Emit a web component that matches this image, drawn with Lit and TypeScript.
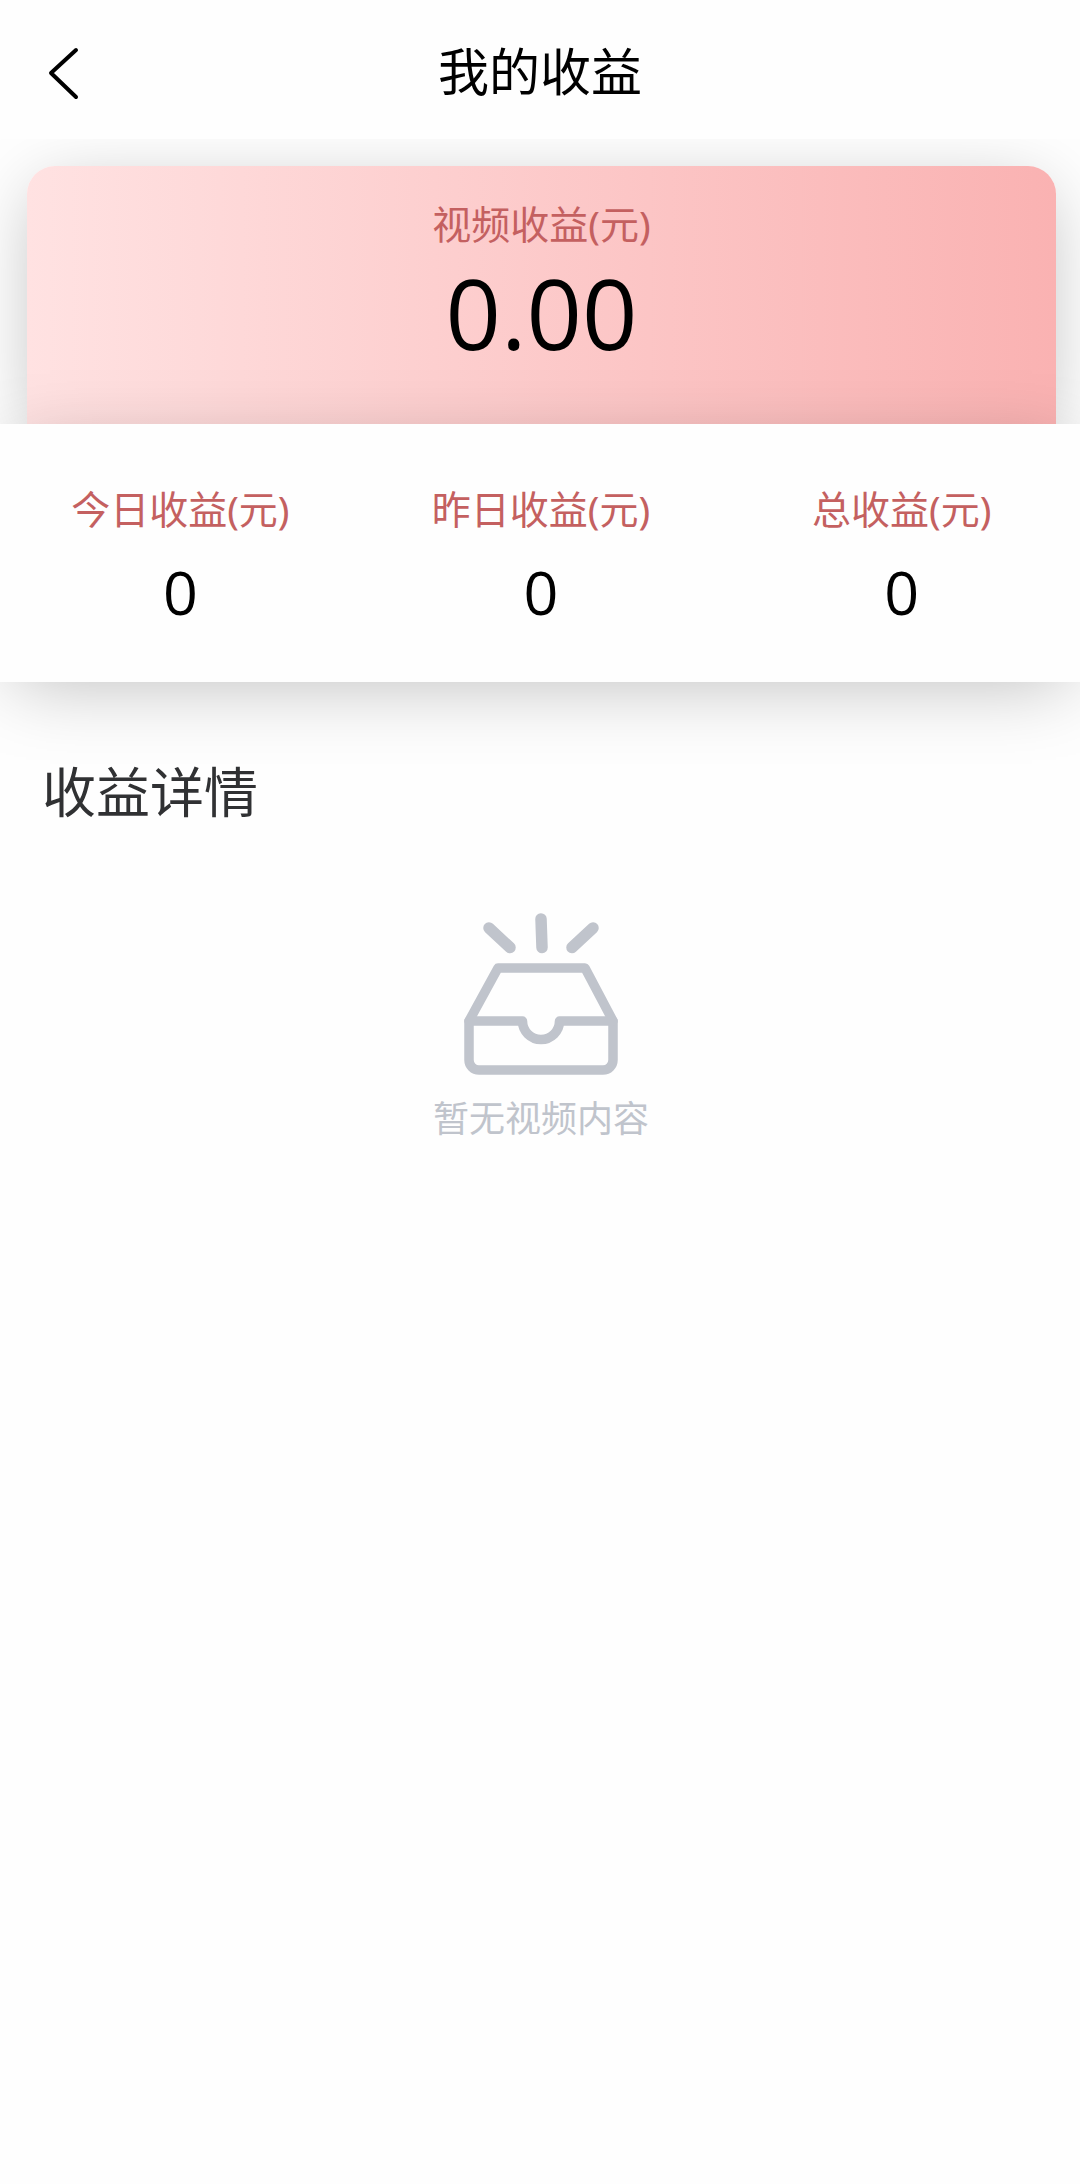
import { LitElement, html, css } from "lit";
import { customElement, state } from "lit/decorators.js";

interface Stat {
  label: string;
  value: string;
}

@customElement("app-root")
export class AppRoot extends LitElement {
  @state() private total = "0.00";

  @state() private stats: Stat[] = [
    { label: "今日收益(元)", value: "0" },
    { label: "昨日收益(元)", value: "0" },
    { label: "总收益(元)", value: "0" },
  ];

  static styles = css`
    :host {
      display: block;
      min-height: 100vh;
      overflow: hidden;
      background: #fefefe;
      color: #000;
      font-family: "Noto Sans", "Noto Sans CJK SC", sans-serif;
    }
    h1, h2, p, dl, dt, dd {
      margin: 0;
      font-weight: 400;
    }
    .nav {
      position: relative;
      z-index: 2;
      display: grid;
      grid-template-columns: 128px 1fr 128px;
      align-items: center;
      height: 139px;
      background: #fefefe;
    }
    .back {
      display: flex;
      align-items: center;
      justify-content: center;
      height: 100%;
      padding: 8px 0 0;
      border: 0;
      background: none;
      color: inherit;
    }
    .back svg {
      width: 32px;
      height: 54px;
    }
    .title {
      padding-top: 2px;
      font-size: 51px;
      line-height: 72px;
      text-align: center;
    }
    .card {
      display: flex;
      flex-direction: column;
      align-items: center;
      height: 258px;
      margin: 27px 24px 0 27px;
      padding-top: 29px;
      box-sizing: border-box;
      border-radius: 28px 28px 0 0;
      background: linear-gradient(90deg, #ffe2e2, #fab2b2);
      box-shadow: 0 14px 72px -10px rgba(0, 0, 0, 0.27);
    }
    .label {
      color: #c46060;
      font-size: 39px;
      line-height: 58px;
    }
    .total,
    .value {
      font-family: "Open Sans", "Noto Sans", sans-serif;
    }
    .total {
      font-size: 97px;
      line-height: 118px;
    }
    .stats {
      position: relative;
      display: grid;
      grid-template-columns: repeat(3, 1fr);
      height: 258px;
      margin-right: -2px;
      padding-top: 56px;
      box-sizing: border-box;
      background: #fefefe;
      box-shadow: 0 14px 72px -14px rgba(0, 0, 0, 0.27);
      text-align: center;
    }
    .value {
      font-size: 61px;
      line-height: 108px;
    }
    .heading {
      padding: 70px 42px 0;
      color: #303133;
      font-size: 54px;
      line-height: 80px;
    }
    .empty {
      display: flex;
      flex-direction: column;
      align-items: center;
      padding: 79px 0 0 2px;
      color: #c0c4cc;
      font-size: 36px;
      line-height: 54px;
    }
    .empty svg {
      width: 156px;
      height: 164px;
      margin-bottom: 17px;
    }
  `;

  render() {
    return html`
      <header class="nav">
        <button class="back" aria-label="返回">
          <svg viewBox="0 0 32 54" fill="none" stroke="currentColor" stroke-width="4" stroke-linecap="round" stroke-linejoin="round" aria-hidden="true">
            <path d="M28 3 3 26l25 24" />
          </svg>
        </button>
        <h1 class="title">我的收益</h1>
      </header>
      <main>
        <section class="card">
          <p class="label">视频收益(元)</p>
          <p class="total">${this.total}</p>
        </section>
        <dl class="stats">
          ${this.stats.map(
            (s) => html`<div>
              <dt class="label">${s.label}</dt>
              <dd class="value">${s.value}</dd>
            </div>`
          )}
        </dl>
        <h2 class="heading">收益详情</h2>
        <section class="empty">
          <svg viewBox="0 0 156 164" fill="none" stroke="currentColor" stroke-width="9.5" stroke-linecap="round" stroke-linejoin="round" aria-hidden="true">
            <path d="M6 110 35 57h87l28 53v39a10 10 0 0 1-10 10H16a10 10 0 0 1-10-10Z" />
            <path d="M6 110h53.5a18.5 18.5 0 0 0 37 0H150" />
            <path stroke-width="11.5" d="m26 17 21 19.5M78 8l1 28.500M130 17l-21 19.5" />
          </svg>
          <p>暂无视频内容</p>
        </section>
      </main>
    `;
  }
}
